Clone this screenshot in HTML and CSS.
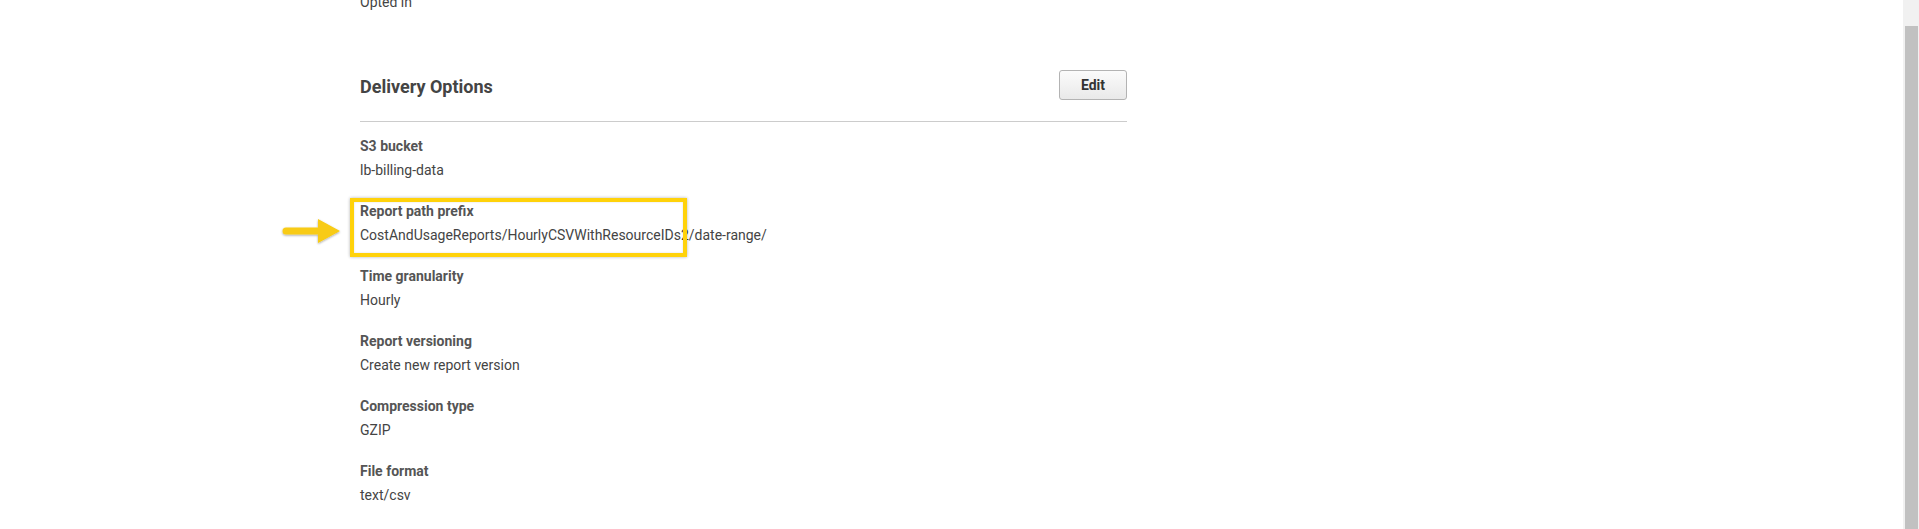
FILE: index.html
```html
<!DOCTYPE html>
<html lang="en">
<head>
<meta charset="utf-8">
<title>Delivery Options</title>
<link rel="stylesheet" href="styles.css">
</head>
<body>
<div class="page">
  <main class="main">
    <div class="content">
      <div class="prev-value">Opted in</div>
      <section class="section">
        <header class="section-header">
          <h2 class="section-title">Delivery Options</h2>
          <button class="btn" type="button">Edit</button>
        </header>
        <div class="rows">
          <div class="row">
            <div class="label">S3 bucket</div>
            <div class="value">lb-billing-data</div>
          </div>
          <div class="row row-highlight">
            <div class="label">Report path prefix</div>
            <div class="value">CostAndUsageReports/HourlyCSVWithResourceIDs2/date-range/</div>
            <div class="highlight-box"></div>
            <svg class="arrow" width="64" height="32" viewBox="0 0 64 32">
              <defs>
                <filter id="sh" x="-20%" y="-40%" width="140%" height="180%">
                  <feDropShadow dx="0" dy="1" stdDeviation="1.2" flood-color="#000" flood-opacity="0.35"/>
                </filter>
              </defs>
              <g filter="url(#sh)">
                <path d="M6 12.5 H38 V4 L60 16 L38 28 V19.5 H6 A3.5 3.5 0 0 1 6 12.5 Z" fill="#f8cb12"/>
              </g>
            </svg>
          </div>
          <div class="row">
            <div class="label">Time granularity</div>
            <div class="value">Hourly</div>
          </div>
          <div class="row">
            <div class="label">Report versioning</div>
            <div class="value">Create new report version</div>
          </div>
          <div class="row">
            <div class="label">Compression type</div>
            <div class="value">GZIP</div>
          </div>
          <div class="row">
            <div class="label">File format</div>
            <div class="value">text/csv</div>
          </div>
        </div>
      </section>
    </div>
  </main>
  <div class="scrollbar"><div class="scroll-thumb"></div></div>
</div>
</body>
</html>
```
FILE: styles.css
```css
html, body {
  margin: 0;
  padding: 0;
  background: #fff;
  height: 100%;
  overflow: hidden;
}
body {
  font-family: Roboto, "Liberation Sans", Arial, sans-serif;
  font-size: 14px;
  line-height: 20px;
  color: #444;
}
.page {
  display: flex;
  height: 529px;
}
.main {
  flex: 1;
  overflow: hidden;
}
.content {
  width: 767px;
  margin-left: 360px;
}
.prev-value {
  margin-top: -8px;
  color: #444;
}
.section {
  margin-top: 40px;
}
.section-header {
  display: flex;
  align-items: center;
  justify-content: space-between;
  height: 69px;
  border-bottom: 1px solid #cccccc;
}
.section-title {
  margin: 0;
  font-size: 18px;
  line-height: 24px;
  font-weight: 700;
  color: #444;
}
.btn {
  width: 68px;
  height: 30px;
  padding: 0;
  border: 1px solid #b3b3b3;
  border-radius: 3px;
  background: linear-gradient(#fbfbfb, #e9e9e9);
  font-family: Roboto, "Liberation Sans", Arial, sans-serif;
  font-size: 14px;
  font-weight: 700;
  color: #333;
  margin-bottom: 3px;
}
.rows {
  margin-top: 14px;
}
.row {
  margin-bottom: 21px;
}
.label {
  font-weight: 700;
  color: #555;
}
.value {
  margin-top: 4px;
  color: #444;
}
.row-highlight {
  position: relative;
}
.highlight-box {
  position: absolute;
  left: -10px;
  top: -3px;
  width: 329px;
  height: 51px;
  border: 4px solid #ffd20a;
  box-shadow: 0 0 3px rgba(0, 0, 0, 0.3), inset 0 0 2px rgba(0, 0, 0, 0.15);
}
.arrow {
  position: absolute;
  left: -80px;
  top: 14px;
}
.scrollbar {
  width: 16px;
  background: #f1f1f1;
  display: flex;
  flex-direction: column;
  padding-top: 26px;
  box-sizing: border-box;
}
.scroll-thumb {
  flex: 1;
  margin-left: 2px;
  margin-right: 1px;
  background: #c1c1c1;
}
```
